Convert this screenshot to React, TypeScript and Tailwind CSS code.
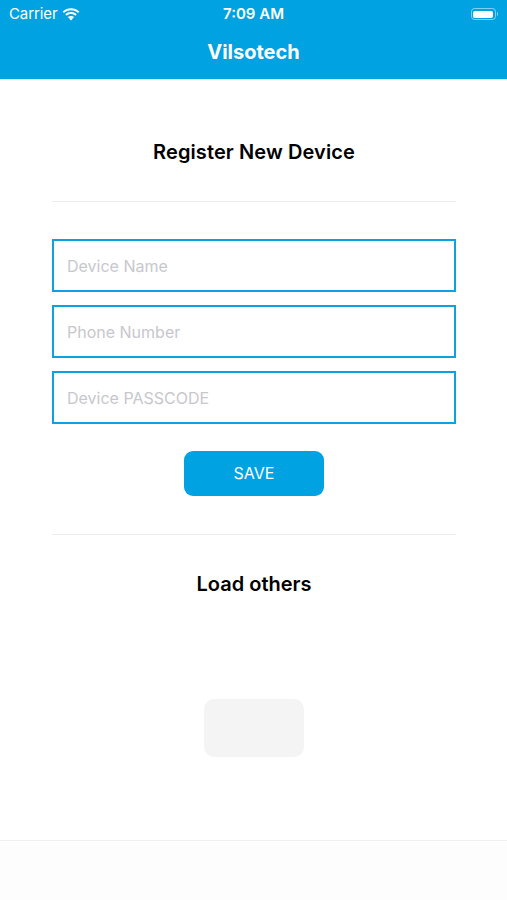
import React from "react";

function Wifi() {
  return (
    <svg width="18" height="13" viewBox="0 0 18 13" fill="white">
      <path d="M9 2.2c2.7 0 5.2 1 7.1 2.8l1.3-1.4C15.1 1.4 12.2.2 9 .2S2.9 1.4.6 3.6L1.9 5C3.8 3.2 6.3 2.2 9 2.2z" />
      <path d="M9 6c1.7 0 3.2.6 4.4 1.7l1.3-1.4C13.2 4.9 11.2 4.1 9 4.1S4.8 4.9 3.3 6.3l1.3 1.4C5.8 6.6 7.3 6 9 6z" />
      <path d="M9 9.7c.7 0 1.4.3 1.9.7L9 12.6 7.1 10.4c.5-.4 1.2-.7 1.9-.7z" />
      <path d="M9 7.9c1.2 0 2.3.4 3.1 1.2L10.9 10.4A2.9 2.9 0 0 0 9 9.7c-.7 0-1.4.3-1.9.7L5.9 9.1C6.7 8.3 7.8 7.9 9 7.9z" />
    </svg>
  );
}

function Battery() {
  return (
    <div className="flex items-center">
      <div className="w-[25px] h-[12px] rounded-[3.5px] border border-white/50 p-[1.5px]">
        <div className="w-full h-full bg-white rounded-[2px]" />
      </div>
      <div className="w-[1.5px] h-[4px] bg-white/50 rounded-r-sm ml-[1px]" />
    </div>
  );
}

function Field({ placeholder }: { placeholder: string }) {
  return (
    <div className="h-[53px] border-2 border-[#0ea1df] flex items-center px-[13px]">
      <span className="text-[16px] text-[#c7c7cd]">{placeholder}</span>
    </div>
  );
}

export default function App() {
  return (
    <div
      className="w-[507px] h-[900px] bg-white flex flex-col overflow-hidden"
      style={{ fontFamily: '"Inter", "Liberation Sans", sans-serif' }}
    >
      <div className="bg-[#00a2e2] h-[79px] flex flex-col text-white">
        <div className="h-[28px] flex items-center justify-between px-[9px] relative">
          <div className="flex items-center gap-[5px]">
            <span className="text-[15px] tracking-[-0.1px]">Carrier</span>
            <Wifi />
          </div>
          <span className="absolute left-1/2 -translate-x-1/2 text-[15px] font-semibold">7:09 AM</span>
          <Battery />
        </div>
        <div className="flex-1 flex items-center justify-center pb-[3px]">
          <span className="text-[20px] font-bold">Vilsotech</span>
        </div>
      </div>
      <div className="h-px bg-[#d8eef8]" />
      <div className="flex-1 flex flex-col pl-[52px] pr-[51px]">
        <div className="h-[121px] flex items-end justify-center pb-[34px]">
          <span className="text-[20px] font-semibold text-black tracking-[0.1px]">Register New Device</span>
        </div>
        <div className="h-px bg-[#ececec]" />
        <div className="flex flex-col gap-[13px] mt-[37px]">
          <Field placeholder="Device Name" />
          <Field placeholder="Phone Number" />
          <Field placeholder="Device PASSCODE" />
        </div>
        <div className="flex justify-center mt-[27px]">
          <div className="w-[140px] h-[45px] rounded-[9px] bg-[#00a2e2] flex items-center justify-center">
            <span className="text-white text-[16px] -mt-[1px]">SAVE</span>
          </div>
        </div>
        <div className="h-px bg-[#ececec] mt-[38px]" />
        <div className="flex justify-center mt-[34px]">
          <span className="text-[20px] font-semibold text-black">Load others</span>
        </div>
        <div className="flex justify-center mt-[100px]">
          <div className="w-[100px] h-[58px] rounded-[10px] bg-[#f4f4f4]" />
        </div>
      </div>
      <div className="h-px bg-[#efefef]" />
      <div className="h-[59px] bg-[#fdfdfd]" />
    </div>
  );
}
